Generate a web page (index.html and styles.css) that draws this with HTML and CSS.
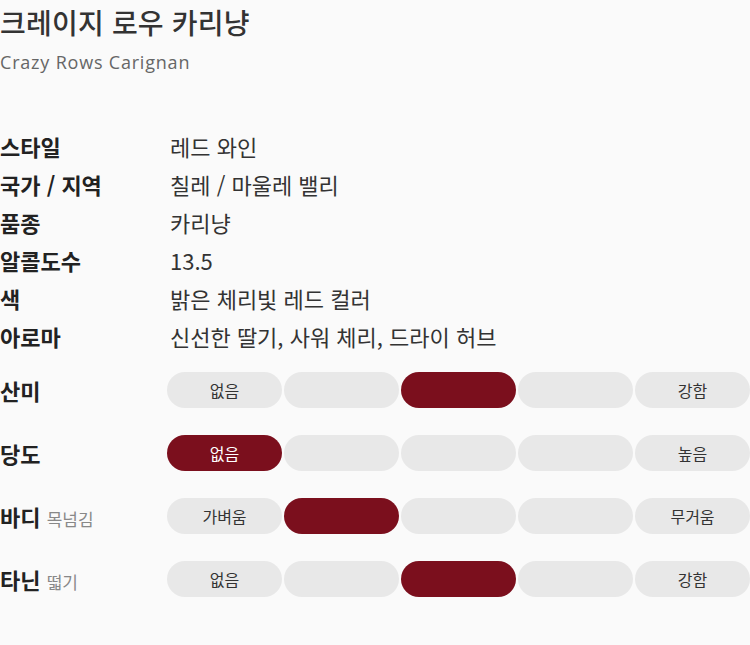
FILE: index.html
```html
<!DOCTYPE html>
<html lang="ko">
<head>
<meta charset="utf-8">
<link rel="stylesheet" href="styles.css">
</head>
<body>
<div class="page">
  <header class="head">
    <h1 class="title">크레이지 로우 카리냥</h1>
    <p class="subtitle">Crazy Rows Carignan</p>
  </header>

  <dl class="info">
    <div class="info-row"><dt>스타일</dt><dd>레드 와인</dd></div>
    <div class="info-row"><dt>국가 / 지역</dt><dd>칠레 / 마울레 밸리</dd></div>
    <div class="info-row"><dt>품종</dt><dd>카리냥</dd></div>
    <div class="info-row"><dt>알콜도수</dt><dd>13.5</dd></div>
    <div class="info-row"><dt>색</dt><dd>밝은 체리빛 레드 컬러</dd></div>
    <div class="info-row"><dt>아로마</dt><dd>신선한 딸기, 사워 체리, 드라이 허브</dd></div>
  </dl>

  <div class="scales">
    <div class="scale">
      <div class="scale-label">산미</div>
      <div class="pills">
        <span class="pill">없음</span><span class="pill"></span><span class="pill on"></span><span class="pill"></span><span class="pill">강함</span>
      </div>
    </div>
    <div class="scale">
      <div class="scale-label">당도</div>
      <div class="pills">
        <span class="pill on">없음</span><span class="pill"></span><span class="pill"></span><span class="pill"></span><span class="pill">높음</span>
      </div>
    </div>
    <div class="scale">
      <div class="scale-label">바디 <small>목넘김</small></div>
      <div class="pills">
        <span class="pill">가벼움</span><span class="pill on"></span><span class="pill"></span><span class="pill"></span><span class="pill">무거움</span>
      </div>
    </div>
    <div class="scale">
      <div class="scale-label">타닌 <small>떫기</small></div>
      <div class="pills">
        <span class="pill">없음</span><span class="pill"></span><span class="pill on"></span><span class="pill"></span><span class="pill">강함</span>
      </div>
    </div>
  </div>
</div>
</body>
</html>
```

FILE: styles.css
```css
html, body {
  margin: 0;
  padding: 0;
  background: #fafafa;
}
body {
  font-family: "Noto Sans CJK KR", "Noto Sans", sans-serif;
  color: #333;
}
.page {
  width: 750px;
}
.head {
  height: 127px;
}
.title {
  margin: 0;
  font-size: 28px;
  font-weight: 500;
  line-height: 44px;
  color: #333;
  letter-spacing: 0.2px;
}
.subtitle {
  margin: 0;
  font-family: "Open Sans", "Lato", sans-serif;
  font-size: 18px;
  line-height: 36px;
  letter-spacing: 0.8px;
  color: #666;
}
.info {
  margin: 0;
}
.info-row {
  display: grid;
  grid-template-columns: 170px 1fr;
  height: 38px;
  align-items: center;
}
.info-row dt {
  font-size: 22px;
  font-weight: 700;
  line-height: 38px;
  color: #222;
}
.info-row dd {
  margin: 0;
  font-size: 22px;
  font-weight: 400;
  line-height: 38px;
}
.scales {
  margin-top: 17px;
  display: flex;
  flex-direction: column;
  gap: 27px;
}
.scale {
  display: grid;
  grid-template-columns: 167px 1fr;
  align-items: center;
  height: 36px;
}
.scale-label {
  font-size: 22px;
  font-weight: 700;
  color: #222;
}
.scale-label small {
  font-size: 17px;
  font-weight: 400;
  color: #888;
}
.pills {
  display: flex;
  gap: 2px;
}
.pill {
  flex: 1;
  height: 36px;
  border-radius: 18px;
  background: #e8e8e8;
  display: flex;
  align-items: center;
  justify-content: center;
  font-size: 16px;
  color: #333;
}
.pill.on {
  background: #7b0f1d;
  color: #fff;
}
```
